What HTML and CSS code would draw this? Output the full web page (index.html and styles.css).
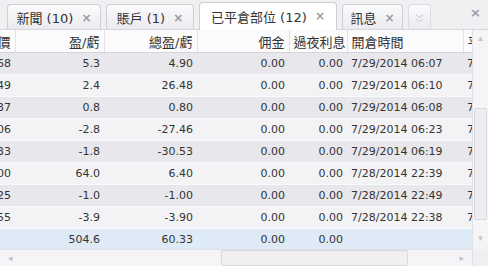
FILE: index.html
```html
<!DOCTYPE html>
<html lang="zh-Hant">
<head>
    <meta charset="UTF-8">
    <title>已平倉部位</title>
    <link rel="stylesheet" href="styles.css">
</head>
<body>
    <div class="panel">
        <!-- Tab strip -->
        <div class="tabs">
            <div class="tab tab-news">新聞 (10) <span class="tab-close">×</span></div>
            <div class="tab tab-account">賬戶 (1) <span class="tab-close">×</span></div>
            <div class="tab tab-closed active">已平倉部位 (12) <span class="tab-close">×</span></div>
            <div class="tab tab-msg">訊息 <span class="tab-close">×</span></div>
            <div class="tab tab-more">
                <svg width="9" height="10" viewBox="0 0 9 10">
                    <path d="M1 2 L4.5 4.5 L8 2 M1 6 L4.5 8.5 L8 6" fill="none" stroke="#c4c4cc" stroke-width="1"/>
                </svg>
            </div>
            <div class="tabs-fill"></div>
            <span class="panel-close">×</span>
        </div>

        <!-- Grid -->
        <div class="grid">
            <div class="grid-main">
                <div class="grid-view">
                    <table class="data">
                        <colgroup>
                            <col class="c-price">
                            <col class="c-pl">
                            <col class="c-total">
                            <col class="c-fee">
                            <col class="c-swap">
                            <col class="c-open">
                            <col class="c-close">
                        </colgroup>
                        <thead>
                            <tr>
                                <th class="num">價</th>
                                <th class="num">盈/虧</th>
                                <th class="num">總盈/虧</th>
                                <th class="num">佣金</th>
                                <th class="num">過夜利息</th>
                                <th>開倉時間</th>
                                <th>平倉時間</th>
                            </tr>
                        </thead>
                        <tbody>
                            <tr><td class="num">1.3468</td><td class="num">5.3</td><td class="num">4.90</td><td class="num">0.00</td><td class="num">0.00</td><td>7/29/2014 06:07</td><td>7/29/2014 08:12</td></tr>
                            <tr><td class="num">1.3449</td><td class="num">2.4</td><td class="num">26.48</td><td class="num">0.00</td><td class="num">0.00</td><td>7/29/2014 06:10</td><td>7/29/2014 08:12</td></tr>
                            <tr><td class="num">1.3437</td><td class="num">0.8</td><td class="num">0.80</td><td class="num">0.00</td><td class="num">0.00</td><td>7/29/2014 06:08</td><td>7/29/2014 08:12</td></tr>
                            <tr><td class="num">1.3406</td><td class="num">-2.8</td><td class="num">-27.46</td><td class="num">0.00</td><td class="num">0.00</td><td>7/29/2014 06:23</td><td>7/29/2014 08:12</td></tr>
                            <tr><td class="num">1.3433</td><td class="num">-1.8</td><td class="num">-30.53</td><td class="num">0.00</td><td class="num">0.00</td><td>7/29/2014 06:19</td><td>7/29/2014 08:12</td></tr>
                            <tr><td class="num">1.3400</td><td class="num">64.0</td><td class="num">6.40</td><td class="num">0.00</td><td class="num">0.00</td><td>7/28/2014 22:39</td><td>7/29/2014 08:12</td></tr>
                            <tr><td class="num">1.3425</td><td class="num">-1.0</td><td class="num">-1.00</td><td class="num">0.00</td><td class="num">0.00</td><td>7/28/2014 22:49</td><td>7/29/2014 08:12</td></tr>
                            <tr><td class="num">1.3455</td><td class="num">-3.9</td><td class="num">-3.90</td><td class="num">0.00</td><td class="num">0.00</td><td>7/28/2014 22:38</td><td>7/29/2014 08:12</td></tr>
                        </tbody>
                        <tfoot>
                            <tr><td></td><td class="num">504.6</td><td class="num">60.33</td><td class="num">0.00</td><td class="num">0.00</td><td></td><td></td></tr>
                        </tfoot>
                    </table>
                </div>
                <!-- Horizontal scrollbar -->
                <div class="hscroll">
                    <span class="arrow">◂</span>
                    <div class="hscroll-track"><div class="hscroll-thumb"></div></div>
                    <span class="arrow">▸</span>
                </div>
            </div>
            <!-- Vertical scrollbar -->
            <div class="vscroll">
                <span class="arrow">▴</span>
                <div class="vscroll-track"><div class="vscroll-thumb"></div></div>
                <span class="arrow">▾</span>
                <div class="corner"></div>
            </div>
        </div>
    </div>
</body>
</html>
```

FILE: styles.css
```css
body {
    margin: 0;
    font-family: "DejaVu Sans", "Noto Sans CJK TC", sans-serif;
    color: #333;
    background: #f0f0f3;
}
.panel {
    width: 488px;
    height: 266px;
    overflow: hidden;
    display: flex;
    flex-direction: column;
}
/* Tab strip */
.tabs {
    height: 30px;
    display: flex;
    align-items: flex-end;
    padding-left: 7px;
    gap: 5px;
    background: #f0f0f3;
    box-sizing: border-box;
    border-bottom: 1px solid #d6d6dc;
}
.tab {
    height: 25px;
    box-sizing: border-box;
    display: flex;
    align-items: center;
    justify-content: center;
    padding-top: 1px;
    font-size: 13px;
    color: #333;
    white-space: pre;
    border: 1px solid #cfcfd6;
    border-bottom: none;
    border-radius: 4px 4px 0 0;
    background: linear-gradient(#fbfbfc, #ebebef);
}
.tab-news { width: 94px; }
.tab-account { width: 88px; }
.tab-closed { width: 138px; }
.tab-msg { width: 61px; }
.tab.active {
    height: 28px;
    background: #fff;
    margin-bottom: -1px;
    padding-top: 0;
    padding-bottom: 1px;
}
.tab-close {
    font-size: 12px;
    font-weight: bold;
    color: #9a9aa2;
    margin-left: 4px;
}
.tab-more {
    width: 23px;
    border-color: #dcdce2;
}
.tabs-fill {
    flex: 1;
}
.panel-close {
    align-self: center;
    font-size: 13px;
    font-weight: bold;
    color: #9a9aa2;
    margin-right: 7px;
    margin-top: -4px;
}
/* Grid */
.grid {
    flex: 1;
    display: flex;
    min-height: 0;
}
.grid-main {
    width: 472px;
    display: flex;
    flex-direction: column;
}
.grid-view {
    flex: 1;
    overflow: hidden;
    background: #f3f3f6;
}
.data {
    border-collapse: collapse;
    table-layout: fixed;
    width: 568px;
    margin-left: -45px; /* horizontal scroll position */
    font-size: 11px;
}
.c-price { width: 60px; }
.c-pl { width: 89px; }
.c-total { width: 93px; }
.c-fee { width: 92px; }
.c-swap { width: 58px; }
.c-open { width: 116px; }
.c-close { width: 60px; }
th {
    height: 22px;
    padding: 0 4px;
    font-weight: normal;
    font-size: 13px;
    text-align: left;
    white-space: nowrap;
    overflow: hidden;
    background: #fbfbfc;
    border-right: 1px solid #e2e2e6;
    border-bottom: 1px solid #d4d4da;
}
td {
    height: 21px;
    padding: 0 4px;
    white-space: nowrap;
    overflow: hidden;
    border-bottom: 1px solid #fafafb;
}
.num {
    text-align: right;
}
tbody tr:nth-child(odd) td {
    background: #e7e7ec;
}
tbody tr:nth-child(even) td {
    background: #f3f3f6;
}
tfoot td {
    height: 20px;
    background: #dfeaf7;
    border-bottom: none;
}
/* Scrollbars */
.arrow {
    font-size: 9px;
    color: #c2c2c8;
    line-height: 1;
}
.hscroll {
    height: 17px;
    display: flex;
    align-items: center;
    background: #f5f5f7;
    border-top: 1px solid #e0e0e5;
    box-sizing: border-box;
    padding: 0 8px;
}
.hscroll-track {
    flex: 1;
    height: 100%;
    display: flex;
    align-items: center;
    padding-left: 208px;
    padding-right: 51px;
}
.hscroll-thumb {
    flex: 1;
    height: 14px;
    background: #f0f0f3;
    border: 1px solid #d8d8de;
    border-radius: 2px;
}
.vscroll {
    width: 16px;
    display: flex;
    flex-direction: column;
    align-items: center;
    background: #f5f5f7;
    border-left: 1px solid #e0e0e5;
    box-sizing: border-box;
    padding-top: 4px;
}
.vscroll-track {
    flex: 1;
    width: 100%;
    display: flex;
    flex-direction: column;
    padding: 65px 1px 14px;
    box-sizing: border-box;
}
.vscroll-thumb {
    flex: 1;
    background: #eeeef2;
    border: 1px solid #d8d8de;
    border-radius: 2px;
}
.corner {
    height: 17px;
    width: 100%;
    margin-top: 6px;
    background: #f0f0f3;
}
```
